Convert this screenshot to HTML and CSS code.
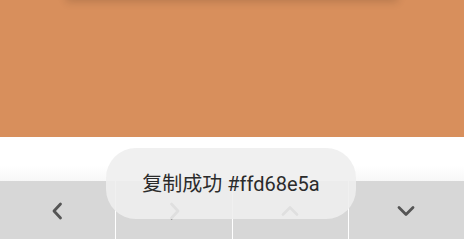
FILE: index.html
```html
<!DOCTYPE html>
<html>
<head>
<meta charset="utf-8">
<link rel="stylesheet" href="styles.css">
</head>
<body>
<div class="page">
  <div class="swatch">
    <div class="card-shadow"></div>
  </div>
  <div class="spacer"></div>
  <div class="toolbar">
    <div class="btn">
      <svg width="16" height="20" viewBox="0 0 16 20"><path d="M10.5 3 L4 10 L10.5 17" fill="none" stroke="#555" stroke-width="2.8" stroke-linecap="round" stroke-linejoin="round"/></svg>
    </div>
    <div class="btn">
      <svg width="16" height="20" viewBox="0 0 16 20"><path d="M5.5 3 L12 10 L5.5 17" fill="none" stroke="#555" stroke-width="2.8" stroke-linecap="round" stroke-linejoin="round"/></svg>
    </div>
    <div class="btn">
      <svg width="20" height="16" viewBox="0 0 20 16"><path d="M3 11.5 L10 4.5 L17 11.5" fill="none" stroke="#555" stroke-width="2.8" stroke-linecap="round" stroke-linejoin="round"/></svg>
    </div>
    <div class="btn">
      <svg width="20" height="16" viewBox="0 0 20 16"><path d="M3 4.5 L10 11.5 L17 4.5" fill="none" stroke="#555" stroke-width="2.8" stroke-linecap="round" stroke-linejoin="round"/></svg>
    </div>
  </div>
  <div class="toast">复制成功 #ffd68e5a</div>
</div>
</body>
</html>
```
FILE: styles.css
```css
html, body {
  margin: 0;
  padding: 0;
  width: 464px;
  height: 239px;
  overflow: hidden;
  background: #ffffff;
}
.page {
  position: relative;
  width: 464px;
  height: 239px;
  display: flex;
  flex-direction: column;
  font-family: Roboto, "Noto Sans CJK SC", sans-serif;
}
.swatch {
  height: 137px;
  background: #d88f5c;
  position: relative;
  overflow: hidden;
}
.card-shadow {
  position: absolute;
  left: 66px;
  top: -20px;
  width: 332px;
  height: 20px;
  background: #d88f5c;
  box-shadow: 0 2px 8px rgba(0, 0, 0, 0.15);
}
.spacer {
  height: 44px;
  background: linear-gradient(to bottom, #ffffff 0, #ffffff 28px, #f7f7f7 44px);
}
.toolbar {
  flex: 1;
  display: grid;
  grid-template-columns: repeat(4, 1fr);
  gap: 1px;
  background: #ffffff;
}
.btn {
  background: #d7d7d7;
  display: flex;
  align-items: center;
  justify-content: center;
  padding-top: 2px;
}
.toast {
  position: absolute;
  left: 106px;
  top: 148px;
  width: 250px;
  height: 71px;
  border-radius: 30px;
  background: rgba(238, 238, 238, 0.9);
  display: flex;
  align-items: center;
  justify-content: center;
  font-size: 20px;
  color: #2b2b2b;
  padding-bottom: 3px;
  box-sizing: border-box;
}
```
